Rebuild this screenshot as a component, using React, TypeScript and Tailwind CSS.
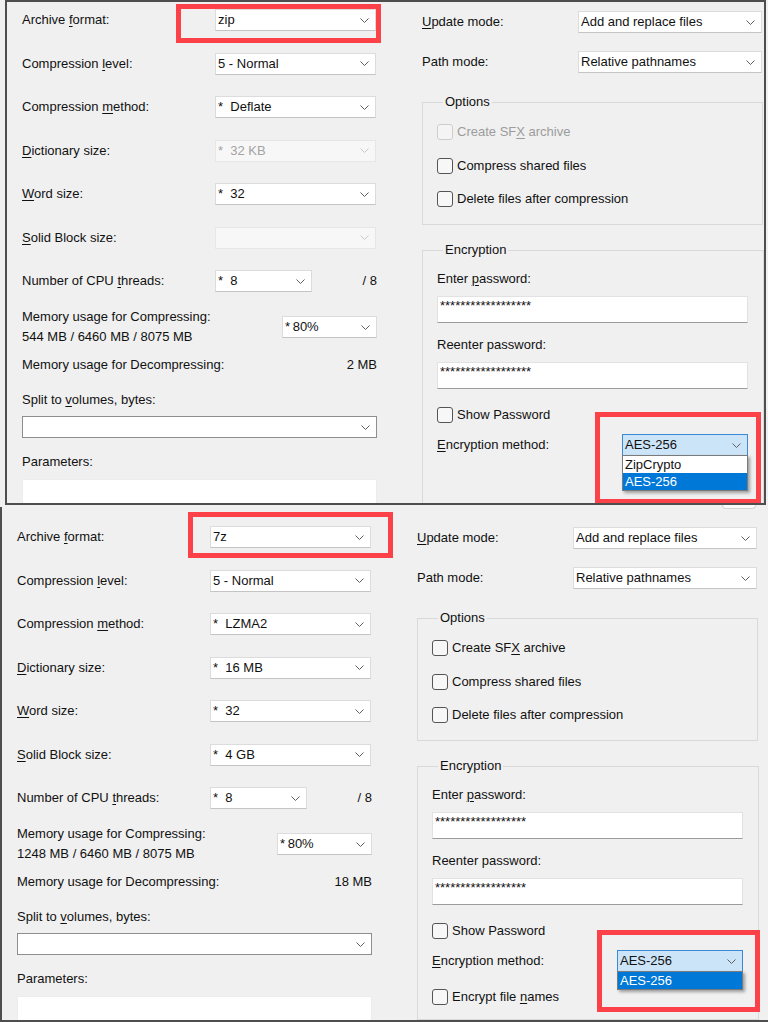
import React from "react";
import clsx from "clsx";

type PanelData = {
  format: string;
  level: string;
  method: string;
  dict: string;
  dictDisabled: boolean;
  word: string;
  solid: string;
  solidDisabled: boolean;
  cpu: string;
  mem: string;
  memPct: string;
  decomp: string;
  sfxDisabled: boolean;
  encList: string[];
  encryptNames: boolean;
};

const zipData: PanelData = {
  format: "zip",
  level: "5 - Normal",
  method: "*  Deflate",
  dict: "*  32 KB",
  dictDisabled: true,
  word: "*  32",
  solid: "",
  solidDisabled: true,
  cpu: "*  8",
  mem: "544 MB / 6460 MB / 8075 MB",
  memPct: "*\u200980%",
  decomp: "2 MB",
  sfxDisabled: true,
  encList: ["ZipCrypto", "AES-256"],
  encryptNames: false,
};

const sevenZData: PanelData = {
  format: "7z",
  level: "5 - Normal",
  method: "*  LZMA2",
  dict: "*  16 MB",
  dictDisabled: false,
  word: "*  32",
  solid: "*  4 GB",
  solidDisabled: false,
  cpu: "*  8",
  mem: "1248 MB / 6460 MB / 8075 MB",
  memPct: "*\u200980%",
  decomp: "18 MB",
  sfxDisabled: false,
  encList: ["AES-256"],
  encryptNames: true,
};

const U = ({ children }: { children: React.ReactNode }) => (
  <span className="underline decoration-1 underline-offset-[2px]">{children}</span>
);

const Chevron = ({ dim }: { dim?: boolean }) => (
  <svg width="9" height="5" viewBox="0 0 9 5" className="shrink-0">
    <path d="M0.5 0.5L4.5 4.5L8.5 0.5" fill="none" stroke={dim ? "#c8c8c8" : "#5e5e5e"} strokeWidth="1" />
  </svg>
);

type SelectProps = {
  value?: string;
  className?: string;
  disabled?: boolean;
  focused?: boolean;
  editable?: boolean;
  list?: string[];
};

function Select({ value = "", className, disabled, focused, editable, list }: SelectProps) {
  return (
    <div
      className={clsx(
        "relative flex h-[22px] shrink-0 items-center justify-between border pl-[2px] pr-[6px] whitespace-pre",
        disabled
          ? "border-[#e6e6e6] bg-[#f7f7f7] text-[#a3a3a3]"
          : focused
          ? "border-[#3a8ad8] bg-[#cce4f7]"
          : editable
          ? "border-[#8e8e8e] bg-white"
          : "border-[#dcdcdc] border-b-[#c4c4c4] bg-white",
        className
      )}
    >
      <span>{value}</span>
      <Chevron dim={disabled} />
      {list && (
        <div className="absolute left-[-1px] right-[-1px] top-full z-10 border border-[#7a7a7a] bg-white shadow-[2px_2px_3px_rgba(0,0,0,0.35)]">
          {list.map((item, i) => (
            <div
              key={item}
              className={clsx(
                "h-[17px] pl-[2px] leading-[17px]",
                i === list.length - 1 ? "bg-[#0078d7] text-white" : "text-[#111]"
              )}
            >
              {item}
            </div>
          ))}
        </div>
      )}
    </div>
  );
}

const Row = ({ label, children }: { label: React.ReactNode; children: React.ReactNode }) => (
  <div className="flex h-[22px] items-center">
    <div className="w-[193px] shrink-0">{label}</div>
    {children}
  </div>
);

const Check = ({ children, disabled }: { children: React.ReactNode; disabled?: boolean }) => (
  <div className={clsx("flex h-[20px] items-center", disabled && "text-[#9c9c9c]")}>
    <div
      className={clsx(
        "h-[16px] w-[16px] shrink-0 rounded-[3px] border",
        disabled ? "border-[#cdcdcd] bg-[#f4f4f4]" : "border-[#555] bg-[#f7f7f7]"
      )}
    />
    <span className="ml-[4px]">{children}</span>
  </div>
);

const PwBox = () => (
  <div className="h-[27px] border border-[#e2e2e2] border-b-[#9c9c9c] bg-white pl-[2px] pt-[1px]">
    ******************
  </div>
);

function Panel({
  d,
  className,
  rightPt,
  redA,
  redB,
}: {
  d: PanelData;
  className: string;
  rightPt: string;
  redA: string;
  redB: string;
}) {
  return (
    <div className={clsx("relative flex overflow-hidden pl-[15px]", className)}>
      {/* left column */}
      <div className="flex w-[355px] shrink-0 flex-col">
        <div className="flex flex-col gap-[21.5px]">
          <Row label={<>Archive <U>f</U>ormat:</>}>
            <Select value={d.format} className="w-[161px]" />
          </Row>
          <Row label={<>Compression <U>l</U>evel:</>}>
            <Select value={d.level} className="w-[161px]" />
          </Row>
          <Row label={<>Compression <U>m</U>ethod:</>}>
            <Select value={d.method} className="w-[161px]" />
          </Row>
          <Row label={<><U>D</U>ictionary size:</>}>
            <Select value={d.dict} disabled={d.dictDisabled} className="w-[161px]" />
          </Row>
          <Row label={<><U>W</U>ord size:</>}>
            <Select value={d.word} className="w-[161px]" />
          </Row>
          <Row label={<><U>S</U>olid Block size:</>}>
            <Select value={d.solid} disabled={d.solidDisabled} className="w-[161px]" />
          </Row>
          <Row label={<>Number of CPU <U>t</U>hreads:</>}>
            <Select value={d.cpu} className="w-[97px]" />
            <div className="flex-1 text-right">/ 8</div>
          </Row>
        </div>

        <div className="mt-[15px] flex h-[40px] items-center">
          <div className="leading-[20px]">
            Memory usage for Compressing:
            <br />
            {d.mem}
          </div>
          <Select value={d.memPct} className="ml-auto w-[95px]" />
        </div>

        <div className="mt-[10px] flex h-[20px] items-center">
          <span>Memory usage for Decompressing:</span>
          <span className="ml-auto">{d.decomp}</span>
        </div>

        <div className="mt-[17px] h-[20px] leading-[20px]">
          Split to <U>v</U>olumes, bytes:
        </div>
        <Select editable className="mt-[6px] w-[355px]" />

        <div className="mt-[14px] h-[20px] leading-[20px]">Parameters:</div>
        <div className="mt-[7px] h-[60px] w-[355px] shrink-0 border border-[#ececec] bg-white" />
      </div>

      {/* right column */}
      <div className={clsx("ml-[45px] flex w-[341px] shrink-0 flex-col", rightPt)}>
        <div className="flex h-[22px] items-center">
          <div className="w-[156px] shrink-0">
            <U>U</U>pdate mode:
          </div>
          <Select value="Add and replace files" className="w-[184px]" />
        </div>
        <div className="mt-[18px] flex h-[22px] items-center">
          <div className="w-[156px] shrink-0">Path mode:</div>
          <Select value="Relative pathnames" className="w-[184px]" />
        </div>

        <fieldset className="mt-[21px] border border-[#d9d9d9] pb-[15px] pl-[14px]">
          <legend className="ml-[6px] px-[2px] leading-[16px]">Options</legend>
          <div className="flex flex-col gap-[13.5px] pt-[12px]">
            <Check disabled={d.sfxDisabled}>
              Create SF<U>X</U> archive
            </Check>
            <Check>Compress shared files</Check>
            <Check>Delete files after compression</Check>
          </div>
        </fieldset>

        <fieldset className="mt-[17px] shrink-0 border border-[#d9d9d9] pb-[12px] pl-[14px] pr-[15px]">
          <legend className="ml-[6px] px-[2px] leading-[16px]">Encryption</legend>
          <div className="flex flex-col pt-[11px]">
            <div className="h-[20px] leading-[20px]">
              Enter <U>p</U>assword:
            </div>
            <div className="mt-[7px]">
              <PwBox />
            </div>
            <div className="mt-[12px] h-[20px] leading-[20px]">Reenter password:</div>
            <div className="mt-[7px]">
              <PwBox />
            </div>
            <div className="mt-[16px]">
              <Check>Show Password</Check>
            </div>
            <div className="mt-[9px] flex h-[22px] items-center">
              <div className="w-[185px] shrink-0">
                <U>E</U>ncryption method:
              </div>
              <Select value="AES-256" focused list={d.encList} className="w-[126px]" />
            </div>
            {d.encryptNames ? (
              <div className="mt-[15px]">
                <Check>
                  Encrypt file <U>n</U>ames
                </Check>
              </div>
            ) : (
              <div className="h-[60px]" />
            )}
          </div>
        </fieldset>
      </div>

      {/* annotation boxes */}
      <div className={clsx("pointer-events-none absolute z-20 border-[5px] border-[#fd4148]", redA)} />
      <div className={clsx("pointer-events-none absolute z-20 border-[5px] border-[#fd4148]", redB)} />
    </div>
  );
}

export default function App() {
  return (
    <div className="relative h-[1022px] w-[768px] overflow-hidden bg-[#f0f0f0] font-['Liberation_Sans',Arial,sans-serif] text-[13px] leading-[16px] text-[#111]">
      <Panel
        d={zipData}
        className="ml-[5px] h-[505px] w-[761px] border-2 border-[#4e4e4e] pt-[7px]"
        rightPt="pt-[2px]"
        redA="left-[169px] top-[2px] h-[39px] w-[205px]"
        redB="left-[588px] top-[410px] h-[92px] w-[166px]"
      />
      <Panel
        d={sevenZData}
        className="mt-[2px] h-[515px] w-[768px] border-b-2 border-l-2 border-[#4e4e4e] pt-[19px]"
        rightPt="pt-[1px]"
        redA="left-[186px] top-[5px] h-[46px] w-[205px]"
        redB="left-[595px] top-[423px] h-[82px] w-[163px]"
      />
      {/* edge of a button peeking out between the two shots */}
      <div className="absolute left-[722px] top-[505px] h-[4px] w-[34px] rounded-b-[4px] border border-t-0 border-[#d2d2d2] bg-[#fbfbfb]" />
    </div>
  );
}
